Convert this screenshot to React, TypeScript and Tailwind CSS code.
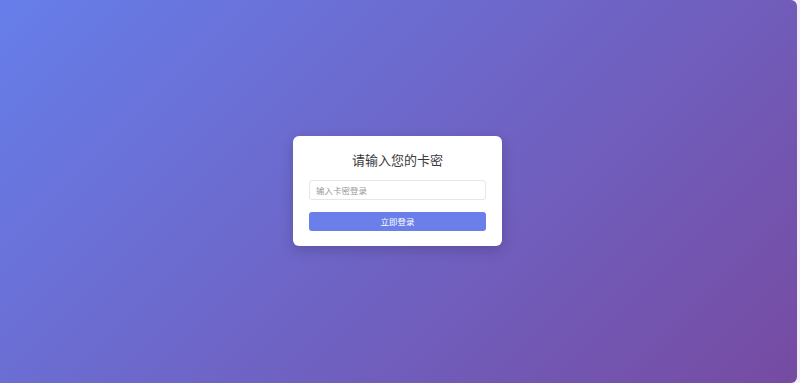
import React from "react";

export default function App() {
  return (
    <div className="w-[800px] h-[383px] bg-[#f3effa] overflow-hidden" style={{ fontFamily: '"Noto Sans CJK SC", "Noto Sans", sans-serif' }}>
      <div className="w-[797px] h-[383px] rounded-r-[6px] bg-[linear-gradient(135deg,#667eea_0%,#764ba2_100%)] flex items-center justify-center">
        <div className="w-[209px] h-[110px] bg-white rounded-[6px] shadow-[0_4px_14px_rgba(0,0,0,0.18)] px-[16px] pt-[14px] flex flex-col ml-[-2px] mt-[-2px]">
          <h1 className="text-[13px] leading-[20px] text-[#3a3a3a] text-center font-normal">请输入您的卡密</h1>
          <input
            className="mt-[10px] w-full h-[20px] border border-[#e6e6e6] rounded-[3px] px-[6px] text-[8.5px] outline-none placeholder:text-[#999]"
            placeholder="输入卡密登录"
          />
          <button className="mt-[12px] w-full h-[19px] bg-[#6a7fe9] rounded-[3px] text-white text-[8.5px] leading-[19px]">立即登录</button>
        </div>
      </div>
    </div>
  );
}
